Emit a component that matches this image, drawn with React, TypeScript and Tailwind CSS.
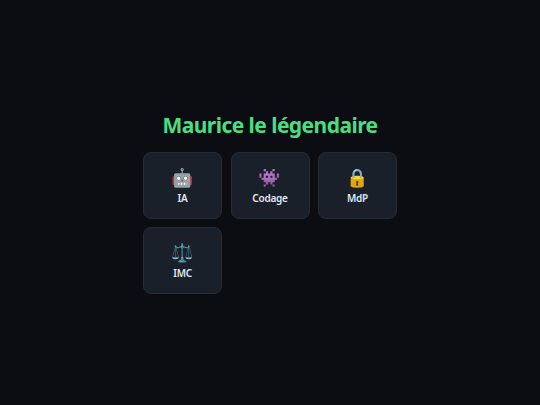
const tools = [
  { icon: "🤖", label: "IA" },
  { icon: "👾", label: "Codage" },
  { icon: "🔒", label: "MdP" },
  { icon: "⚖️", label: "IMC" },
];

export default function App() {
  return (
    <div className="min-h-screen bg-[#0b0d12] flex flex-col items-center justify-center font-['Noto_Sans','Noto_Color_Emoji',sans-serif]">
      <h1 className="text-[21px] leading-[28px] font-bold tracking-[-0.55px] text-[#4ade80] mb-[13px]">Maurice le légendaire</h1>
      <div className="grid grid-cols-3 w-[254px] gap-[8.5px]">
        {tools.map((tool) => (
          <div key={tool.label} className="h-[67px] rounded-lg border border-[#262c36] bg-[#1a202a] flex flex-col items-center justify-center pb-px">
            <span className="text-[18px] leading-[27px]">{tool.icon}</span>
            <span className="text-[10px] leading-[15px] font-semibold tracking-[-0.25px] text-[#e2e8f0]">{tool.label}</span>
          </div>
        ))}
      </div>
    </div>
  );
}
